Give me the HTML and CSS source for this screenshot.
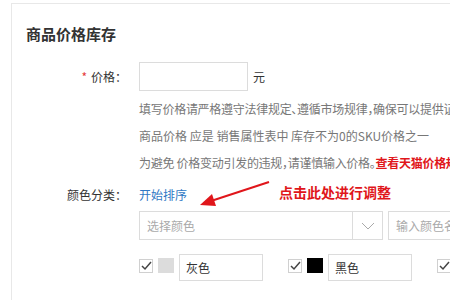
FILE: index.html
```html
<!DOCTYPE html>
<html lang="zh">
<head>
<meta charset="utf-8">
<link rel="stylesheet" href="styles.css">
</head>
<body>
<div class="card">
  <h2 class="title">商品价格库存</h2>
  <div class="form">
    <div class="label label-price"><span class="star">*</span>价格：</div>
    <div class="field">
      <div class="price-row">
        <span class="input price-input"></span>
        <span class="unit">元</span>
      </div>
      <p class="help help-tight">填写价格请严格遵守法律规定、遵循市场规律，确保可以提供证明</p>
      <p class="help">商品价格 应是 销售属性表中 库存不为0的SKU价格之一</p>
      <p class="help help-tight">为避免 价格变动引发的违规，请谨慎输入价格。<span class="rule">查看天猫价格规范</span></p>
    </div>
    <div class="label label-color">颜色分类：</div>
    <div class="field color-field">
      <div class="sort-line">
        <a class="sort-link">开始排序</a>
      </div>
      <div class="annotation">
        <svg class="arrow" width="80" height="30" viewBox="0 0 80 30">
          <line x1="72" y1="3" x2="14" y2="22" stroke="#e0161b" stroke-width="2"/>
          <polygon points="3,26 15,15 19,27" fill="#e0161b"/>
        </svg>
        <span class="note">点击此处进行调整</span>
      </div>
      <div class="select-row">
        <div class="select">
          <span class="select-text">选择颜色</span>
          <span class="select-btn">
            <svg width="14" height="8" viewBox="0 0 14 8"><polyline points="1,1 7,7 13,1" fill="none" stroke="#aaa" stroke-width="1"/></svg>
          </span>
        </div>
        <div class="input name-input">输入颜色名称</div>
      </div>
      <div class="swatch-row">
        <div class="swatch-item">
          <span class="check"><svg width="12" height="12" viewBox="0 0 12 12"><polyline points="2,6 5,9 11,2" fill="none" stroke="#444" stroke-width="1.5"/></svg></span>
          <span class="swatch gray"></span>
          <span class="input swatch-input">灰色</span>
        </div>
        <div class="swatch-item">
          <span class="check"><svg width="12" height="12" viewBox="0 0 12 12"><polyline points="2,6 5,9 11,2" fill="none" stroke="#444" stroke-width="1.5"/></svg></span>
          <span class="swatch black"></span>
          <span class="input swatch-input">黑色</span>
        </div>
        <div class="swatch-item">
          <span class="check"><svg width="12" height="12" viewBox="0 0 12 12"><polyline points="2,6 5,9 11,2" fill="none" stroke="#444" stroke-width="1.5"/></svg></span>
          <span class="swatch white"></span>
          <span class="input swatch-input">白色</span>
        </div>
      </div>
    </div>
  </div>
</div>
</body>
</html>
```

FILE: styles.css
```css
* { box-sizing: border-box; }
html, body {
  margin: 0;
  padding: 0;
  background: #fff;
  overflow: hidden;
  width: 450px;
  height: 300px;
}
body {
  font-family: "Noto Sans CJK SC", "Noto Sans", sans-serif;
  font-size: 12px;
  color: #333;
}
.card {
  margin: 3px 0 0 11px;
  border-top: 1px solid #e8e8e8;
  border-left: 1px solid #e8e8e8;
  height: 300px;
  padding-top: 19px;
  overflow: hidden;
}
.title {
  margin: 0 0 0 14px;
  font-size: 15px;
  line-height: 22px;
  font-weight: 700;
  color: #333;
}
.form {
  margin-top: 17px;
  display: grid;
  grid-template-columns: 115px 1fr;
  column-gap: 12px;
  white-space: nowrap;
}
.label {
  text-align: right;
  color: #333;
  font-size: 12px;
}
.label-price {
  line-height: 29px;
}
.star {
  color: #e4393c;
  margin-right: 4px;
  font-size: 12px;
}
.price-row {
  display: flex;
  align-items: center;
  gap: 5px;
}
.input {
  display: block;
  border: 1px solid #dcdcdc;
  background: #fff;
}
.price-input {
  width: 109px;
  height: 29px;
}
.unit {
  font-size: 12px;
  color: #333;
}
.help {
  margin: 0;
  color: #777;
  font-size: 12px;
  line-height: 27px;
  font-feature-settings: "halt";
}
.help-tight {
  letter-spacing: -0.28px;
}
.help:first-of-type {
  margin-top: 4px;
}
.rule {
  color: #e0161b;
  font-weight: 700;
}
.label-color {
  margin-top: 9px;
  line-height: 20px;
}
.color-field {
  position: relative;
  margin-top: 9px;
}
.sort-line {
  line-height: 20px;
}
.sort-link {
  color: #2f78c4;
  font-size: 12px;
}
.annotation {
  position: absolute;
  left: 58px;
  top: -6px;
  display: flex;
  align-items: flex-start;
}
.arrow {
  display: block;
}
.note {
  margin-left: 2px;
  margin-top: 3px;
  color: #e0161b;
  font-weight: 700;
  font-size: 14px;
  line-height: 20px;
}
.select-row {
  margin-top: 6px;
  display: flex;
  gap: 5px;
}
.select {
  width: 244px;
  height: 29px;
  border: 1px solid #dcdcdc;
  display: flex;
  align-items: center;
}
.select-text {
  flex: 1;
  padding-left: 7px;
  color: #aaa;
}
.select-btn {
  width: 30px;
  height: 100%;
  border-left: 1px solid #dcdcdc;
  display: flex;
  align-items: center;
  justify-content: center;
}
.select-btn svg { display: block; }
.name-input {
  width: 120px;
  height: 29px;
  line-height: 27px;
  padding-left: 7px;
  color: #aaa;
}
.swatch-row {
  margin-top: 14px;
  display: flex;
  gap: 25px;
}
.swatch-item {
  display: flex;
  align-items: center;
  gap: 5px;
}
.check {
  width: 14px;
  height: 14px;
  border: 1px solid #d0d0d0;
  display: flex;
  align-items: center;
  justify-content: center;
  margin-top: -4px;
}
.check svg { display: block; }
.swatch {
  width: 16px;
  height: 15px;
  margin-top: -4px;
}
.swatch.gray { background: #dcdcdc; }
.swatch.black { background: #000; }
.swatch.white { background: #fff; border: 1px solid #ddd; }
.swatch-input {
  width: 84px;
  height: 27px;
  line-height: 25px;
  padding-left: 6px;
  color: #333;
}
```
